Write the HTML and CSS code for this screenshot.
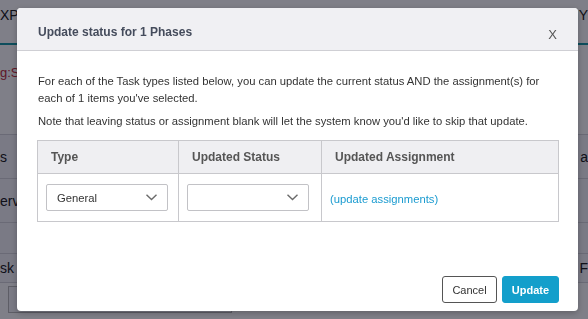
FILE: index.html
```html
<!DOCTYPE html>
<html lang="en">
<head>
    <meta charset="UTF-8">
    <meta name="viewport" content="width=device-width, initial-scale=1.0">
    <title>Update status</title>
    <link rel="stylesheet" href="styles.css">
</head>
<body>
    <div class="page">
        <div class="topbar">
            <span class="brand">XPI</span>
            <span class="user">MY</span>
        </div>
        <div class="filter">g:S</div>
        <div class="list">
            <div class="list-head"><span>s</span><span>a</span></div>
            <div class="list-row"><span>erv</span><span></span></div>
            <div class="list-row tall"><span></span><span></span></div>
            <div class="list-row short"><span>sk</span><span>F</span></div>
        </div>
        <div class="search-box"></div>
    </div>

    <div class="overlay"></div>

    <div class="modal">
        <div class="modal-header">
            <h3>Update status for 1 Phases</h3>
            <span class="close">X</span>
        </div>

        <div class="modal-body">
            <p>For each of the Task types listed below, you can update the current status AND the assignment(s) for each of 1 items you've selected.</p>
            <p>Note that leaving status or assignment blank will let the system know you'd like to skip that update.</p>

            <table class="status-table">
                <tr>
                    <th class="col-type">Type</th>
                    <th class="col-status">Updated Status</th>
                    <th>Updated Assignment</th>
                </tr>
                <tr>
                    <td>
                        <div class="select">
                            <span>General</span>
                            <svg width="11" height="7" viewBox="0 0 11 7"><polyline points="0.5,0.8 5.5,5.6 10.5,0.8" fill="none" stroke="#6b6b6b" stroke-width="1.4"/></svg>
                        </div>
                    </td>
                    <td>
                        <div class="select">
                            <span></span>
                            <svg width="11" height="7" viewBox="0 0 11 7"><polyline points="0.5,0.8 5.5,5.6 10.5,0.8" fill="none" stroke="#6b6b6b" stroke-width="1.4"/></svg>
                        </div>
                    </td>
                    <td><a class="assign-link" href="#">(update assignments)</a></td>
                </tr>
            </table>
        </div>

        <div class="modal-footer">
            <button class="btn-cancel">Cancel</button>
            <button class="btn-update">Update</button>
        </div>
    </div>
</body>
</html>
```

FILE: styles.css
```css
body {
    font-family: 'Liberation Sans', Arial, sans-serif;
    margin: 0;
    background-color: #ffffff;
    overflow: hidden;
    color: #333;
}

/* page behind the dialog */
.page {
    width: 588px;
    height: 319px;
}

.topbar {
    height: 43px;
    display: flex;
    justify-content: space-between;
    align-items: flex-start;
    border-bottom: 2px solid #1a9ba6;
    font-size: 14px;
    color: #222;
}

.brand {
    padding-top: 7px;
}

.user {
    padding-top: 7px;
}

.filter {
    color: #c0303f;
    font-size: 13px;
    padding-top: 20px;
    height: 69px;
}

.list {
    background-color: #f4f4f8;
}

.list-head,
.list-row {
    display: flex;
    justify-content: space-between;
    align-items: center;
    border-top: 1px solid #d4d4da;
    height: 43px;
    font-size: 14px;
    color: #222;
}

.list-row.tall {
    height: 30px;
}

.list-row.short {
    height: 28px;
    border-bottom: 1px solid #d4d4da;
}

.search-box {
    margin: 3px 0 0 8px;
    width: 222px;
    height: 25px;
    border: 1px solid #bbb;
    background-color: #f4f4f8;
}

.overlay {
    position: fixed;
    top: 0;
    left: 0;
    width: 100%;
    height: 100%;
    background-color: rgba(0, 0, 18, 0.5);
}

/* dialog */
.modal {
    position: fixed;
    top: 8px;
    left: 17px;
    width: 561px;
    height: 303px;
    background: white;
    border-radius: 4px;
    display: flex;
    flex-direction: column;
    box-shadow: 0 2px 6px rgba(0, 0, 0, 0.25);
}

.modal-header {
    height: 43px;
    background-color: #f0f0f3;
    border-bottom: 1px solid #cfcfd4;
    border-radius: 4px 4px 0 0;
    display: flex;
    justify-content: space-between;
    align-items: center;
    padding: 0 21px;
    box-sizing: border-box;
}

.modal-header h3 {
    margin: 0;
    font-size: 12px;
    color: #454c5c;
    padding-top: 6px;
}

.close {
    font-size: 13px;
    color: #555;
    padding-top: 10px;
}

.modal-body {
    flex: 1;
    padding: 22px 19px 0 20px;
}

.modal-body p {
    margin: 0 0 6px 1px;
    font-size: 11.25px;
    line-height: 17px;
    color: #333;
}

.status-table {
    margin-top: 10px;
    width: 100%;
    border-collapse: collapse;
}

.status-table th,
.status-table td {
    border: 1px solid #c8c8cc;
    text-align: left;
}

.status-table th {
    background-color: #efeff2;
    height: 32px;
    padding: 0 13px;
    font-size: 12px;
    color: #555;
}

.status-table td {
    height: 47px;
    padding: 0 10px 0 8px;
}

.col-type {
    width: 114px;
}

.col-status {
    width: 116px;
}

.select {
    width: 122px;
    height: 27px;
    box-sizing: border-box;
    border: 1px solid #c2c2c6;
    border-radius: 2px;
    display: flex;
    justify-content: space-between;
    align-items: center;
    padding: 0 10px 0 10px;
    font-size: 11.25px;
    color: #333;
}

.assign-link {
    color: #1a9bd0;
    text-decoration: none;
    font-size: 11.25px;
}

.modal-footer {
    display: flex;
    justify-content: flex-end;
    gap: 5px;
    padding: 0 19px 8px 0;
}

.modal-footer button {
    height: 27px;
    border-radius: 3px;
    font-family: inherit;
    font-size: 11px;
    cursor: pointer;
}

.btn-cancel {
    width: 55px;
    background: white;
    border: 1px solid #555;
    color: #333;
}

.btn-update {
    width: 57px;
    background-color: #139fcb;
    border: 1px solid #139fcb;
    color: white;
    font-weight: bold;
}
```
